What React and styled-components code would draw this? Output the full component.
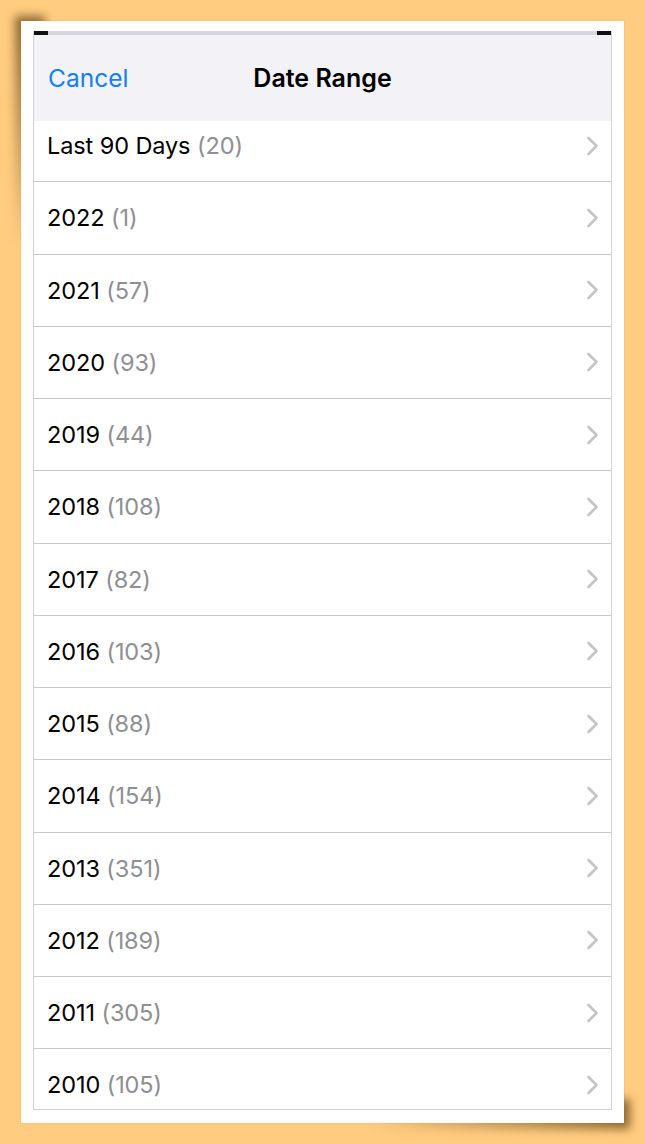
import React from 'react'
import styled, { createGlobalStyle } from 'styled-components'

const GlobalStyle = createGlobalStyle`
  html {
    background: #ffcc80;
  }
  body {
    margin: 0;
    padding: 0;
    font-family: Inter, "Noto Sans", "Liberation Sans", sans-serif;
    -webkit-font-smoothing: antialiased;
  }
`

const Page = styled.div`
  width: 645px;
  height: 1144px;
  padding: 21px 21px 0 21px;
  box-sizing: border-box;
`

const Card = styled.div`
  position: relative;
  width: 603px;
  height: 1102px;
  box-sizing: border-box;
  padding: 10px 12px 13px 12px;
  background: #ffffff;
  box-shadow: 0 0 1px rgba(120, 90, 40, 0.35);

  /* paper lift shadow, top left */
  &::before {
    content: '';
    position: absolute;
    z-index: -1;
    left: 0;
    top: 0;
    width: 30px;
    height: 230px;
    background: linear-gradient(to bottom, rgba(100, 70, 20, 0.75), rgba(100, 70, 20, 0));
    filter: blur(5px);
    transform: translate(-6px, -5px);
  }

  /* paper lift shadow, bottom right */
  &::after {
    content: '';
    position: absolute;
    z-index: -1;
    right: 0;
    bottom: 0;
    width: 260px;
    height: 30px;
    background: linear-gradient(to left, rgba(100, 70, 20, 0.75), rgba(100, 70, 20, 0));
    filter: blur(5px);
    transform: translate(6px, 6px);
  }
`

const Screen = styled.div`
  height: 1079px;
  box-sizing: border-box;
  border: 1px solid #d2d2d6;
  border-top: none;
  overflow: hidden;
  display: flex;
  flex-direction: column;
  background: #ffffff;
`

const StatusStrip = styled.div`
  height: 4px;
  flex-shrink: 0;
  background: #d6d6dc;
  display: flex;
  justify-content: space-between;
  margin: 0 -1px;
`

const StripCap = styled.div`
  width: 15px;
  height: 4px;
  background: #111;
`

const NavBar = styled.div`
  height: 86px;
  flex-shrink: 0;
  background: #f2f2f7;
  display: flex;
  align-items: center;
  position: relative;
  padding: 0 0 0 14px;
`

const CancelButton = styled.span`
  color: #147efb;
  font-size: 24.5px;
  line-height: 1;
`

const Title = styled.span`
  position: absolute;
  left: 0;
  right: 0;
  text-align: center;
  font-size: 25px;
  font-weight: 600;
  color: #000;
  pointer-events: none;
`

const List = styled.div`
  margin-top: -11px;
`

const Row = styled.div`
  height: 71.25px;
  border-bottom: 1px solid #c8c8cc;
  display: flex;
  align-items: center;
  justify-content: space-between;
  padding: 0 12px 0 13px;
`

const Label = styled.span`
  font-size: 23.5px;
  color: #000;
  letter-spacing: -0.1px;
`

const Count = styled.span`
  color: #8e8e93;
`

const Chevron = () => (
  <svg width="13" height="20" viewBox="0 0 13 20">
    <polyline
      points="2.5,2 10.5,10 2.5,18"
      fill="none"
      stroke="#c4c4c8"
      strokeWidth="2.6"
      strokeLinecap="round"
      strokeLinejoin="round"
    />
  </svg>
)

const ranges = [
  ['Last 90 Days', 20],
  ['2022', 1],
  ['2021', 57],
  ['2020', 93],
  ['2019', 44],
  ['2018', 108],
  ['2017', 82],
  ['2016', 103],
  ['2015', 88],
  ['2014', 154],
  ['2013', 351],
  ['2012', 189],
  ['2011', 305],
  ['2010', 105],
]

export default function App() {
  return (
    <>
      <GlobalStyle />
      <Page>
        <Card>
          <Screen>
            <StatusStrip>
              <StripCap />
              <StripCap />
            </StatusStrip>
            <NavBar>
              <CancelButton>Cancel</CancelButton>
              <Title>Date Range</Title>
            </NavBar>
            <List>
              {ranges.map(([label, n]) => (
                <Row key={label}>
                  <Label>
                    {label} <Count>({n})</Count>
                  </Label>
                  <Chevron />
                </Row>
              ))}
            </List>
          </Screen>
        </Card>
      </Page>
    </>
  )
}
